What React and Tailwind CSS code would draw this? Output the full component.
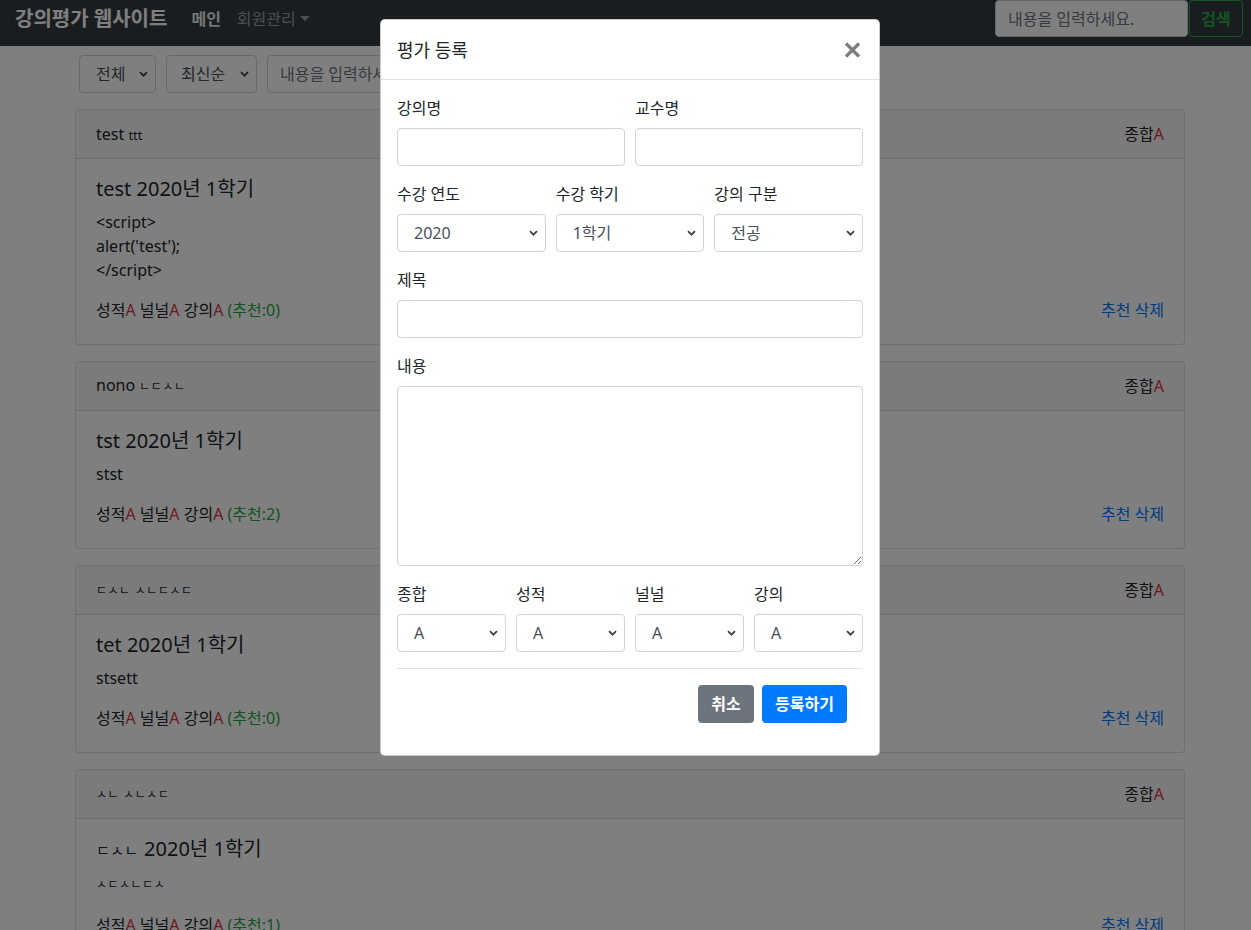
import React from "react";

const FONT = "font-['Noto_Sans','Noto_Sans_CJK_KR',sans-serif]";

function Chevron() {
  return (
    <svg width="9" height="6" viewBox="0 0 9 6" className="shrink-0">
      <path d="M1 1.2l3.5 3.5 3.5-3.5" stroke="#3a3f44" strokeWidth="1.7" fill="none" />
    </svg>
  );
}

function FakeSelect({ value, className = "", pl = "pl-[16px]" }) {
  return (
    <div
      className={`h-[38px] bg-white border border-[#ced4da] rounded-[4px] flex items-center justify-between ${pl} pr-[7px] text-[16px] text-[#495057] ${className}`}
    >
      <span className="leading-6">{value}</span>
      <Chevron />
    </div>
  );
}

function Jamo({ children, className = "" }) {
  return <span className={`text-[12px] tracking-[0.5px] ${className}`}>{children}</span>;
}

function Card({ head, title, lines, rec }) {
  return (
    <div className="border border-black/[.125] rounded-[4px] bg-white">
      <div className="h-[49px] bg-black/[.03] border-b border-black/[.125] px-5 flex items-center justify-between text-[16px] text-[#212529]">
        <div className="leading-6">{head}</div>
        <div className="leading-6">
          종합<span className="text-[#dc3545]">A</span>
        </div>
      </div>
      <div className="px-5 pt-[20px] pb-[22px] text-[#212529]">
        <div className="text-[20px] leading-[20px] mb-[11px]">{title}</div>
        <div className="text-[16px] leading-6 mb-[16px]">
          {lines.map((l, i) => (
            <div key={i}>{l}</div>
          ))}
        </div>
        <div className="flex items-center justify-between text-[16px] leading-6">
          <div>
            성적<span className="text-[#dc3545]">A</span> 널널<span className="text-[#dc3545]">A</span> 강의
            <span className="text-[#dc3545]">A</span>{" "}
            <span className="text-[#28a745]">(추천:{rec})</span>
          </div>
          <div className="text-[#007bff]">추천 삭제</div>
        </div>
      </div>
    </div>
  );
}

function Label({ children }) {
  return <div className="text-[16px] leading-6 mb-2 text-[#212529]">{children}</div>;
}

function Input({ className = "" }) {
  return <div className={`h-[38px] bg-white border border-[#ced4da] rounded-[4px] ${className}`} />;
}

export default function App() {
  return (
    <div className={`relative h-[930px] w-full overflow-hidden bg-white ${FONT}`}>
      {/* Navbar */}
      <nav className="h-[46px] bg-[#343a40] flex items-start pl-[15px] pr-[8px]">
        <div className="h-[37px] flex items-center flex-1">
          <span className="text-[20px] font-bold text-white leading-7 mr-[16px]">강의평가 웹사이트</span>
          <span className="px-2 text-[16px] font-bold text-white/90 leading-6">메인</span>
          <span className="px-2 text-[16px] text-white/50 leading-6 flex items-center">
            회원관리
            <svg width="10" height="6" viewBox="0 0 10 6" className="ml-[4px]">
              <path d="M0 0h10L5 5z" fill="currentColor" />
            </svg>
          </span>
        </div>
        <div className="flex">
          <div className="w-[193px] h-[37px] bg-white border border-[#ced4da] rounded-[4px] flex items-center pl-[12px] text-[16px] text-[#6c757d]">
            내용을 입력하세요.
          </div>
          <div className="ml-[1px] w-[54px] h-[37px] border border-[#28a745] rounded-[4px] flex items-center justify-center text-[16px] font-bold text-[#28a745]">
            검색
          </div>
        </div>
      </nav>

      {/* Content */}
      <div className="pl-[75px]">
        <div className="w-[1110px]">
          <div className="flex gap-[10px] pl-[4px] pt-[9px]">
            <FakeSelect value="전체" className="w-[77px]" />
            <FakeSelect value="최신순" className="w-[91px]" pl="pl-[14px]" />
            <div className="w-[230px] h-[38px] bg-white border border-[#ced4da] rounded-[4px] flex items-center pl-[12px] text-[16px] text-[#6c757d]">
              내용을 입력하세요.
            </div>
          </div>
          <div className="mt-[16px] flex flex-col gap-[16px]">
            <Card
              head={
                <>
                  test <span className="text-[13px]">ttt</span>
                </>
              }
              title="test 2020년 1학기"
              lines={["<script>", "alert('test');", "</script>"]}
              rec="0"
            />
            <Card
              head={
                <>
                  nono <Jamo>ㄴㄷㅅㄴ</Jamo>
                </>
              }
              title="tst 2020년 1학기"
              lines={["stst"]}
              rec="2"
            />
            <Card
              head={
                <>
                  <Jamo>ㄷㅅㄴ</Jamo> <Jamo>ㅅㄴㄷㅅㄷ</Jamo>
                </>
              }
              title="tet 2020년 1학기"
              lines={["stsett"]}
              rec="0"
            />
            <Card
              head={
                <>
                  <Jamo>ㅅㄴ</Jamo> <Jamo>ㅅㄴㅅㄷ</Jamo>
                </>
              }
              title={
                <>
                  <Jamo className="text-[15px]">ㄷㅅㄴ</Jamo> 2020년 1학기
                </>
              }
              lines={[<Jamo key="j">ㅅㄷㅅㄴㄷㅅ</Jamo>]}
              rec="1"
            />
          </div>
        </div>
      </div>

      {/* Backdrop */}
      <div className="absolute inset-0 bg-black/50" />

      {/* Modal */}
      <div className="absolute left-[380px] top-[19px] w-[500px] bg-white border border-black/20 rounded-[5px]">
        <div className="h-[60px] border-b border-[#dee2e6] flex items-center justify-between px-4">
          <span className="text-[18px] leading-7 text-[#212529]">평가 등록</span>
          <svg width="17" height="16" viewBox="0 0 17 16" className="mr-[2px]">
            <path d="M2 1.5l13 13M15 1.5l-13 13" stroke="#7d7d7d" strokeWidth="3.2" />
          </svg>
        </div>
        <div className="p-4">
          <div className="grid grid-cols-2 gap-[10px] mb-4">
            <div>
              <Label>강의명</Label>
              <Input />
            </div>
            <div>
              <Label>교수명</Label>
              <Input />
            </div>
          </div>
          <div className="grid grid-cols-3 gap-[10px] mb-4">
            <div>
              <Label>수강 연도</Label>
              <FakeSelect value="2020" />
            </div>
            <div>
              <Label>수강 학기</Label>
              <FakeSelect value="1학기" />
            </div>
            <div>
              <Label>강의 구분</Label>
              <FakeSelect value="전공" />
            </div>
          </div>
          <div className="mb-4">
            <Label>제목</Label>
            <Input />
          </div>
          <div className="mb-4">
            <Label>내용</Label>
            <textarea className="block w-full h-[180px] bg-white border border-[#ced4da] rounded-[4px] resize-y outline-none" />
          </div>
          <div className="grid grid-cols-4 gap-[10px] mb-4">
            <div>
              <Label>종합</Label>
              <FakeSelect value="A" />
            </div>
            <div>
              <Label>성적</Label>
              <FakeSelect value="A" />
            </div>
            <div>
              <Label>널널</Label>
              <FakeSelect value="A" />
            </div>
            <div>
              <Label>강의</Label>
              <FakeSelect value="A" />
            </div>
          </div>
          <div className="border-t border-[#dee2e6] p-3 flex justify-end gap-2">
            <div className="my-1 w-[56px] h-[38px] bg-[#6c757d] rounded-[4px] flex items-center justify-center text-white text-[16px] font-bold">
              취소
            </div>
            <div className="my-1 mr-1 w-[85px] h-[38px] bg-[#007bff] rounded-[4px] flex items-center justify-center text-white text-[16px] font-bold">
              등록하기
            </div>
          </div>
        </div>
      </div>
    </div>
  );
}
